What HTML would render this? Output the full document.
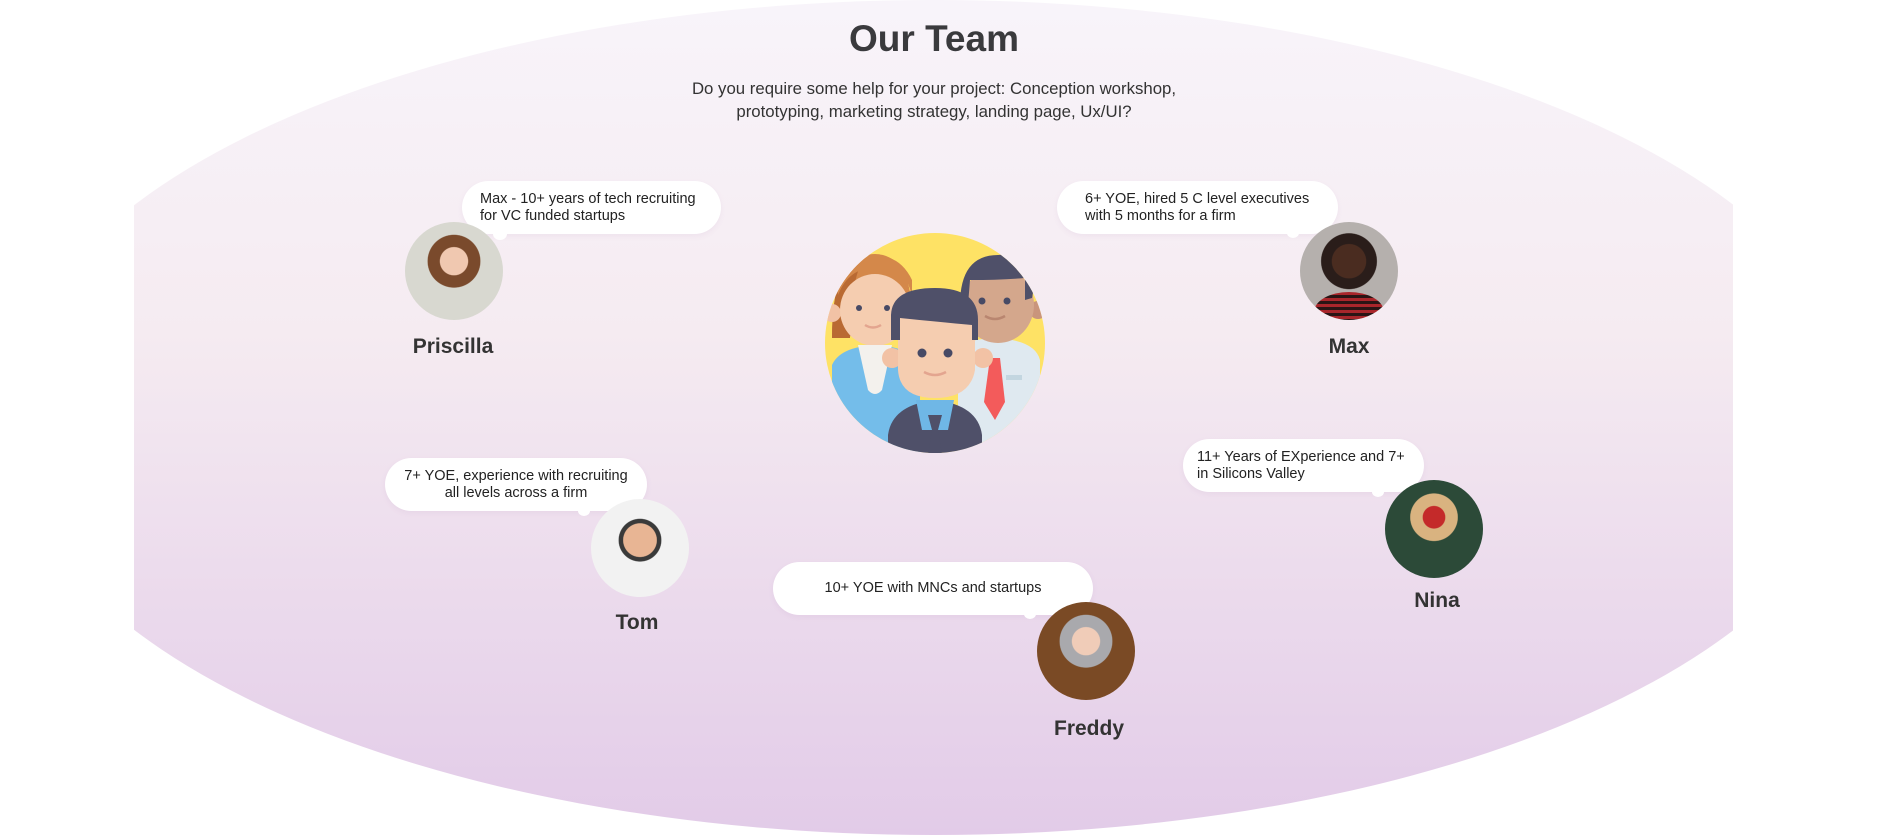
<!DOCTYPE html>
<html><head><meta charset="utf-8"><style>
*{margin:0;padding:0;box-sizing:border-box}
body{width:1890px;height:835px;background:#fff;position:relative;overflow:hidden;font-family:"Liberation Sans",sans-serif;color:#333}
.clip{position:absolute;left:134px;top:0;width:1599px;height:835px;overflow:hidden}
.ell{position:absolute;left:-129px;top:0;width:1858px;height:835px;border-radius:50%;background:linear-gradient(#f8f4fa,#f5ebf1 40%,#e2cbe8)}
h1{position:absolute;left:0;width:1868px;top:18px;text-align:center;font-size:37px;font-weight:bold;color:#3a3a3d}
.sub{position:absolute;left:0;width:1868px;top:77px;text-align:center;font-size:16.8px;line-height:23px;color:#333}
.b{position:absolute;background:#fff;border-radius:27px;font-size:14.5px;line-height:17px;color:#222;padding:10px 18px;box-shadow:0 2px 6px rgba(150,100,160,.08)}
.dot{position:absolute;background:#fff;border-radius:50%}
.av{position:absolute;width:98px;height:98px;border-radius:50%;overflow:hidden}
.n{position:absolute;font-size:21px;font-weight:bold;color:#333;transform:translateX(-50%);white-space:nowrap}
</style></head><body>
<div class="clip"><div class="ell"></div></div>
<h1>Our Team</h1>
<div class="sub">Do you require some help for your project: Conception workshop,<br>prototyping, marketing strategy, landing page, Ux/UI?</div>

<div class="b" style="left:462px;top:181px;width:259px;height:53px">Max - 10+ years of tech recruiting<br>for VC funded startups</div>
<div class="dot" style="left:493px;top:228px;width:14px;height:12px"></div>
<div class="dot" style="left:482px;top:242px;width:8px;height:8px"></div>

<div class="b" style="left:1057px;top:181px;width:281px;height:53px;padding-left:28px">6+ YOE, hired 5 C level executives<br>with 5 months for a firm</div>
<div class="dot" style="left:1287px;top:228px;width:12px;height:10px"></div>

<div class="b" style="left:385px;top:458px;width:262px;height:53px;text-align:center">7+ YOE, experience with recruiting<br>all levels across a firm</div>
<div class="dot" style="left:578px;top:506px;width:12px;height:10px"></div>

<div class="b" style="left:1183px;top:439px;width:241px;height:53px;padding-left:14px">11+ Years of EXperience and 7+<br>in Silicons Valley</div>
<div class="dot" style="left:1372px;top:487px;width:12px;height:10px"></div>
<div class="dot" style="left:1397px;top:498px;width:8px;height:8px"></div>

<div class="b" style="left:773px;top:562px;width:320px;height:53px;text-align:center;line-height:33px">10+ YOE with MNCs and startups</div>
<div class="dot" style="left:1024px;top:609px;width:12px;height:10px"></div>
<div class="dot" style="left:1048px;top:621px;width:8px;height:8px"></div>

<div class="av" style="left:405px;top:222px;background:radial-gradient(circle at 50% 40%,#f0c8b0 0 18%,#7a4a2c 19% 34%,#d8d8d0 35%)"></div>
<div class="av" style="left:1300px;top:222px;background:radial-gradient(circle at 50% 40%,#4a2c20 0 22%,#2a1d1a 23% 36%,#b5b0ad 37%);"><div style="position:absolute;left:14px;top:70px;width:70px;height:40px;border-radius:50% 50% 0 0;background:repeating-linear-gradient(#a8262b 0 3px,#2a1515 3px 6px)"></div></div>
<div class="av" style="left:591px;top:499px;background:radial-gradient(circle at 50% 42%,#e8b594 0 22%,#3a3a3a 23% 28%,#f2f2f2 29%)"></div>
<div class="av" style="left:1385px;top:480px;background:radial-gradient(circle at 50% 38%,#c42a2a 0 14%,#d9b380 15% 30%,#2c4a38 31%)"></div>
<div class="av" style="left:1037px;top:602px;background:radial-gradient(circle at 50% 40%,#f0ccb8 0 18%,#a9a9ad 19% 34%,#7a4a25 35%)"></div>

<div class="n" style="left:453px;top:335px">Priscilla</div>
<div class="n" style="left:1349px;top:335px">Max</div>
<div class="n" style="left:637px;top:611px">Tom</div>
<div class="n" style="left:1437px;top:589px">Nina</div>
<div class="n" style="left:1089px;top:717px">Freddy</div>

<svg style="position:absolute;left:820px;top:220px" width="240" height="240" viewBox="0 0 240 240">
<defs><clipPath id="c"><circle cx="115" cy="123" r="110"/></clipPath></defs>
<circle cx="115" cy="123" r="110" fill="#fee265"/>
<g clip-path="url(#c)">
<path d="M12 118 Q12 35 55 34 Q95 35 92 110 Z" fill="#d4884a"/>
<path d="M12 118 Q12 40 45 36 Q30 60 30 118 Z" fill="#b96a33"/>
<circle cx="12" cy="93" r="9" fill="#f2c2a5"/>
<ellipse cx="55" cy="90" rx="35" ry="36" fill="#f5cdb0"/>
<path d="M18 75 Q30 45 60 48 Q90 50 92 80 L92 60 Q80 35 55 36 Q25 38 18 70Z" fill="#d4884a"/>
<circle cx="39" cy="88" r="3" fill="#474a65"/><circle cx="67" cy="88" r="3" fill="#474a65"/>
<path d="M45 105 Q53 110 61 105" stroke="#e3a58f" stroke-width="2.5" fill="none"/>
<path d="M12 145 Q20 127 55 125 Q95 127 100 150 L100 240 L12 240Z" fill="#74bdea"/>
<path d="M38 125 L72 125 L62 170 Q55 178 48 170Z" fill="#f3f1ed"/>
<path d="M138 130 Q140 120 175 118 Q215 120 220 140 L220 240 L138 240Z" fill="#dfe9f0"/>
<path d="M170 138 L180 138 L185 182 L175 200 L164 182Z" fill="#f35b5b"/>
<circle cx="218" cy="90" r="9" fill="#c9957c"/>
<ellipse cx="178" cy="85" rx="36" ry="38" fill="#d4a78c"/>
<path d="M140 85 Q140 35 178 35 Q200 33 208 40 Q210 30 215 25 Q218 50 212 78 L205 80 L205 58 Q180 60 150 60 L148 85Z" fill="#4f5069"/>
<circle cx="162" cy="81" r="3.5" fill="#474a65"/><circle cx="187" cy="81" r="3.5" fill="#474a65"/>
<path d="M165 96 Q175 102 185 96" stroke="#b98670" stroke-width="2.5" fill="none"/>
<rect x="186" y="155" width="16" height="5" fill="#c3d6e0"/>
<path d="M68 215 Q72 185 115 180 Q158 185 162 215 L162 240 L68 240Z" fill="#4f5069"/>
<path d="M96 180 L134 180 L128 210 L102 210Z" fill="#6fb7e6"/>
<path d="M108 195 L122 195 L118 210 L122 235 L108 235 L112 210Z" fill="#4f5069"/>
<circle cx="72" cy="138" r="10" fill="#f2c2a5"/><circle cx="163" cy="138" r="10" fill="#f2c2a5"/>
<path d="M78 100 Q78 70 115 70 Q155 70 155 100 L155 150 Q150 178 115 178 Q80 178 78 150Z" fill="#f5cdb0"/>
<path d="M71 120 L71 95 Q72 68 115 68 Q158 68 158 100 L158 120 L152 120 L152 105 Q120 102 80 98 L80 120Z" fill="#4f5069"/>
<circle cx="102" cy="133" r="4.5" fill="#474a65"/><circle cx="128" cy="133" r="4.5" fill="#474a65"/>
<path d="M104 152 Q115 158 126 152" stroke="#e3a58f" stroke-width="2.5" fill="none"/>
</g>
</svg>
</body></html>
